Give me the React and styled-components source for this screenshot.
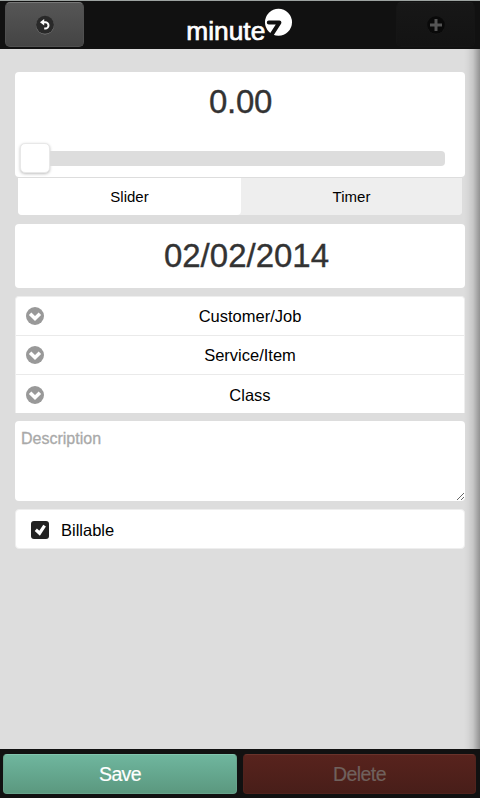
import React from "react";
import styled, { createGlobalStyle, css } from "styled-components";

const Global = createGlobalStyle`
  * { box-sizing: border-box; }
  body { margin: 0; background: #ddd; font-family: "Liberation Sans", Arial, sans-serif; color: #000; }
  button, textarea { font-family: inherit; margin: 0; }
`;

const Page = styled.div`
  width: 480px;
  height: 798px;
  display: flex;
  flex-direction: column;
  overflow: hidden;
  background: #ddd;
`;

const Header = styled.header`
  height: 49px;
  flex: none;
  display: flex;
  justify-content: space-between;
  padding: 1px 5px 0 5px;
  border-top: 1px solid #9da3a1;
  background: #111;
`;

const HeaderButton = styled.button`
  width: 79px;
  height: 45px;
  display: flex;
  align-items: center;
  justify-content: center;
  padding: 0;
  border: 1px solid #505050;
  border-top-color: #777;
  border-radius: 5px;
  background: linear-gradient(#565656, #444);
  ${(p) =>
    p.$disabled &&
    css`
      border-color: #151515;
      border-top-color: #1c1c1c;
      background: linear-gradient(#171717, #131313);
    `}
`;

const Logo = styled.div`
  display: flex;
  width: 108px;
  height: 44px;
`;

const Main = styled.main`
  flex: 1;
  padding: 23px 15px 0;
  background: linear-gradient(to right, transparent 464px, rgba(0, 0, 0, 0.03) 468px, rgba(0, 0, 0, 0.1) 473px, rgba(0, 0, 0, 0.34) 480px);
`;

const Card = styled.section`
  background: #fff;
  border-radius: 4px;
`;

const TimeCard = styled(Card)`
  height: 105px;
  padding: 11px 20px 0 5px;
`;

const BigText = styled.div`
  color: #333;
  font-size: 33px;
  line-height: 38px;
  text-align: center;
  -webkit-text-stroke: 0.35px #333;
`;

const TimeValue = styled(BigText)`
  padding-left: 16px;
  letter-spacing: -0.3px;
`;

const SliderRow = styled.div`
  display: flex;
  align-items: center;
  height: 30px;
  margin-top: 22px;
`;

const Handle = styled.div`
  width: 30px;
  height: 30px;
  flex: none;
  border: 1px solid #e8e8e8;
  border-radius: 5px;
  background: #fff;
  box-shadow: 0 1px 3px rgba(0, 0, 0, 0.25);
`;

const Track = styled.div`
  flex: 1;
  height: 15px;
  border-radius: 0 4px 4px 0;
  background: #ddd;
`;

const Tabs = styled.div`
  display: flex;
  height: 38px;
  margin: 0 3px 9px;
  border-top: 1px solid #ddd;
  border-radius: 0 0 4px 4px;
  background: #eee;
`;

const Tab = styled.button`
  flex: ${(p) => (p.$active ? "0 0 223px" : "1")};
  padding: 0 0 1px;
  border: 0;
  border-radius: 0 0 4px 4px;
  color: #000;
  background: ${(p) => (p.$active ? "#fff" : "#eee")};
  font-size: 15px;
`;

const DateCard = styled(Card)`
  height: 64px;
  padding: 13px 0 0 13px;
`;

const List = styled(Card)`
  height: 117px;
  margin-top: 8px;
  border: 1px solid #eee;
  border-bottom: 0;
  border-radius: 4px 4px 0 0;
`;

const ListRow = styled.div`
  display: grid;
  grid-template-columns: 38px 1fr 18px;
  align-items: center;
  height: ${(p) => (p.$last ? 38 : 39)}px;
  padding-top: ${(p) => (p.$last ? 2 : 0)}px;
  border-bottom: ${(p) => (p.$last ? 0 : 1)}px solid #eaeaea;
  font-size: 16.5px;
  text-align: center;

  svg { margin-left: 10px; }
`;

const Description = styled.textarea`
  display: block;
  width: 450px;
  height: 80px;
  margin-top: 8px;
  padding: 8px 6px;
  border: 0;
  border-radius: 4px;
  background: #fff;
  font-size: 16px;
  line-height: 19px;
  resize: vertical;
  outline: 0;

  &::placeholder { color: #a9a9a9; opacity: 1; -webkit-text-stroke: 0.3px #a9a9a9; }
`;

const CheckRow = styled(Card)`
  display: flex;
  align-items: center;
  gap: 12px;
  height: 40px;
  margin-top: 8px;
  padding: 2px 15px 0;
  border: 1px solid #eee;
  font-size: 16.5px;
`;

const Footer = styled.footer`
  display: grid;
  grid-template-columns: 234px 233px;
  gap: 6px;
  height: 49px;
  flex: none;
  padding: 5px 3px 4px;
  background: #111;
`;

const Action = styled.button`
  padding: 0;
  border: 1px solid ${(p) => (p.$danger ? "#50231d" : "#67a28b")};
  border-top-color: ${(p) => (p.$danger ? "#69332b" : "#83c5ae")};
  border-radius: 4px;
  background: ${(p) => (p.$danger ? "linear-gradient(#58231d, #481e19)" : "linear-gradient(#6fb69e, #5b987f)")};
  color: ${(p) => (p.$danger ? "#70615d" : "#fff")};
  font-size: 19.5px;
  letter-spacing: -0.6px;
  -webkit-text-stroke: 0.2px currentColor;
`;

function BackIcon() {
  return (
    <svg width="20" height="20" viewBox="0 0 20 20">
      <circle cx="10" cy="10.5" r="9" fill="#858585" />
      <circle cx="10" cy="9.8" r="9" fill="#292929" />
      <path d="M7 7.2h3.3a3.2 3.2 0 0 1 0 6.4H9.2" fill="none" stroke="#fff" strokeWidth="2" />
      <path d="M5 7.3 9.2 4v6.6Z" fill="#fff" />
    </svg>
  );
}

function PlusIcon() {
  return (
    <svg width="20" height="20" viewBox="0 0 20 20">
      <circle cx="10" cy="10.6" r="8.8" fill="#1e1e1e" />
      <circle cx="10" cy="10" r="8.8" fill="#090909" />
      <path d="M10 4v12M4 10h12" stroke="#555" strokeWidth="3" />
    </svg>
  );
}

function DownIcon() {
  return (
    <svg width="18" height="18" viewBox="0 0 18 18">
      <circle cx="9" cy="9" r="9" fill="#999" />
      <path d="m4.1 6.7 4.9 4.9 4.9-4.9" fill="none" stroke="#fff" strokeWidth="3.5" />
    </svg>
  );
}

function CheckIcon() {
  return (
    <svg width="18" height="18" viewBox="0 0 18 18">
      <rect width="18" height="18" rx="3" fill="#222" />
      <path d="m4.8 8.7 3.8 3.5 5-7.6" fill="none" stroke="#fff" strokeWidth="3.2" />
    </svg>
  );
}

function MinuteLogo() {
  return (
    <svg width="108" height="44" viewBox="0 0 108 44">
      <text x="0.3" y="37.5" fill="#fff" stroke="#fff" strokeWidth=".7" fontFamily="Liberation Sans, Arial, sans-serif" fontSize="26.5" textLength="79" lengthAdjust="spacingAndGlyphs">minute</text>
      <circle cx="92.5" cy="20.3" r="13.5" fill="#fff" />
      <path d="M82.8 20.6H93.4L85 33.6" fill="none" stroke="#111" strokeWidth="4" strokeLinecap="round" strokeLinejoin="round" />
    </svg>
  );
}

const fields = ["Customer/Job", "Service/Item", "Class"];

export default function App() {
  return (
    <Page>
      <Global />
      <Header>
        <HeaderButton aria-label="Back"><BackIcon /></HeaderButton>
        <Logo><MinuteLogo /></Logo>
        <HeaderButton $disabled aria-label="Add"><PlusIcon /></HeaderButton>
      </Header>
      <Main>
        <TimeCard>
          <TimeValue>0.00</TimeValue>
          <SliderRow><Handle /><Track /></SliderRow>
        </TimeCard>
        <Tabs>
          <Tab $active>Slider</Tab>
          <Tab>Timer</Tab>
        </Tabs>
        <DateCard><BigText>02/02/2014</BigText></DateCard>
        <List>
          {fields.map((name, i) => (
            <ListRow key={name} $last={i === fields.length - 1}>
              <DownIcon /><span>{name}</span>
            </ListRow>
          ))}
        </List>
        <Description placeholder="Description" />
        <CheckRow><CheckIcon /><span>Billable</span></CheckRow>
      </Main>
      <Footer>
        <Action>Save</Action>
        <Action $danger>Delete</Action>
      </Footer>
    </Page>
  );
}
